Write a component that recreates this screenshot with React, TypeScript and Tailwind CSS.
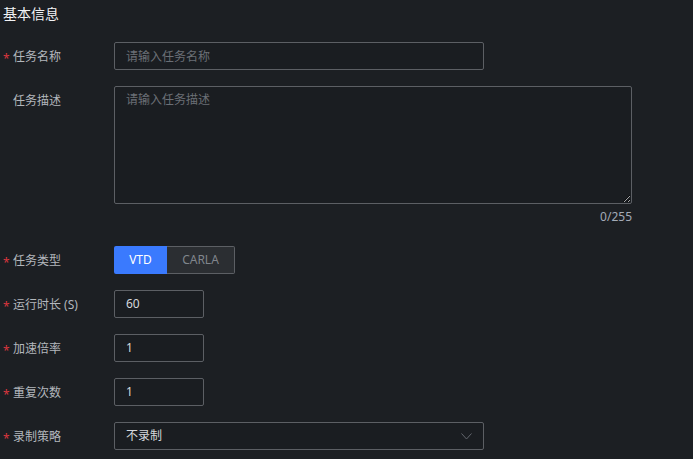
import React from 'react';

const Label: React.FC<{ text: string; required?: boolean }> = ({ text, required }) => (
  <div className="w-[111px] shrink-0 h-[28px] pt-[2px] flex items-center text-xs text-[#b3b7bd]">
    <span className="w-[10px] text-[#d9363e] text-[12px] leading-none pt-[3px]">{required ? '*' : ''}</span>
    <span>{text}</span>
  </div>
);

const App: React.FC = () => {
  const small = [
    { label: '运行时长 (S)', value: '60' },
    { label: '加速倍率', value: '1' },
    { label: '重复次数', value: '1' },
  ];

  return (
    <div
      className="w-full min-h-screen bg-[#1c1f23] px-[3px] pt-[5px]"
      style={{ fontFamily: '"Noto Sans", "Noto Sans CJK SC", sans-serif' }}
    >
      <div className="text-sm leading-[18px] text-[#f2f3f5] font-normal">基本信息</div>

      <div className="mt-[19px] flex flex-col gap-4">
        {/* 任务名称 */}
        <div className="flex">
          <Label text="任务名称" required />
          <input
            className="w-[370px] h-[28px] bg-[#1a1d21] border border-[#5c5f64] rounded-[2px] px-[11px] text-xs text-[#d5d8dc] placeholder:text-[#6b6f76] outline-none"
            placeholder="请输入任务名称"
          />
        </div>

        {/* 任务描述 */}
        <div className="flex">
          <Label text="任务描述" />
          <div className="flex flex-col">
            <textarea
              className="w-[518px] h-[118px] bg-[#1a1d21] border border-[#5c5f64] rounded-[2px] px-[11px] py-[5px] text-xs text-[#d5d8dc] placeholder:text-[#6b6f76] outline-none [color-scheme:dark]"
              placeholder="请输入任务描述"
            />
            <div className="mt-[3px] mb-[3px] h-[20px] leading-[20px] text-right text-xs text-[#a3abb7]">0/255</div>
          </div>
        </div>

        {/* 任务类型 */}
        <div className="flex">
          <Label text="任务类型" required />
          <div className="flex h-[28px] text-xs">
            <div className="w-[53px] flex items-center justify-center bg-[#3a7afe] text-white rounded-l-[2px]">VTD</div>
            <div className="w-[68px] flex items-center justify-center bg-[#2b2e32] text-[#80858c] border border-l-0 border-[#5c5f64] rounded-r-[2px]">
              CARLA
            </div>
          </div>
        </div>

        {small.map((r) => (
          <div key={r.label} className="flex">
            <Label text={r.label} required />
            <div className="w-[90px] h-[28px] bg-[#1a1d21] border border-[#5c5f64] rounded-[2px] px-[11px] flex items-center text-xs text-[#d5d8dc]">
              {r.value}
            </div>
          </div>
        ))}

        {/* 录制策略 */}
        <div className="flex">
          <Label text="录制策略" required />
          <div className="w-[370px] h-[28px] bg-[#1a1d21] border border-[#5c5f64] rounded-[2px] pl-[11px] pr-[11px] flex items-center justify-between text-xs text-[#d5d8dc]">
            <span>不录制</span>
            <svg width="11" height="7" viewBox="0 0 11 7" fill="none">
              <path d="M0.5 0.5 L5.5 6 L10.5 0.5" stroke="#62666c" strokeWidth="1" />
            </svg>
          </div>
        </div>
      </div>
    </div>
  );
};

export default App;
